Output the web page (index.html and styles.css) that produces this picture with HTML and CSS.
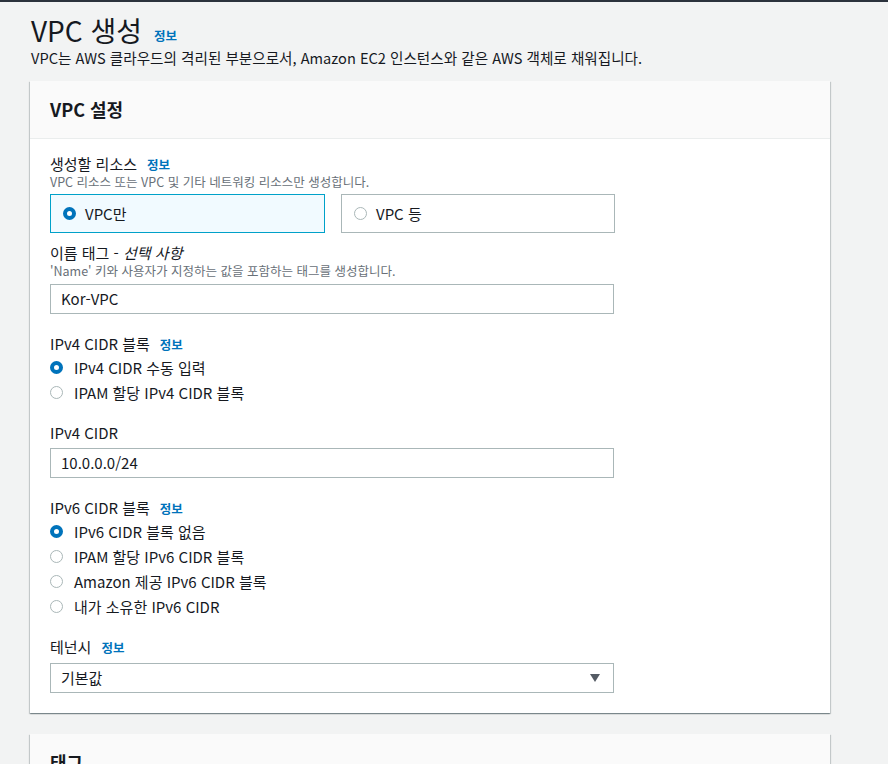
FILE: index.html
```html
<!DOCTYPE html>
<html lang="ko">
<head>
<meta charset="utf-8">
<title>VPC 생성</title>
<link rel="stylesheet" href="styles.css">
</head>
<body>
<div class="topbar"></div>
<main class="page">
  <header class="page-head">
    <h1 class="title">VPC 생성<a class="info" href="#">정보</a></h1>
    <p class="lead">VPC는 AWS 클라우드의 격리된 부분으로서, Amazon EC2 인스턴스와 같은 AWS 객체로 채워집니다.</p>
  </header>

  <section class="card">
    <div class="card-head"><h2>VPC 설정</h2></div>
    <div class="card-body">
      <div class="field">
        <div class="label">생성할 리소스<a class="info" href="#">정보</a></div>
        <div class="desc">VPC 리소스 또는 VPC 및 기타 네트워킹 리소스만 생성합니다.</div>
        <div class="tiles">
          <div class="tile selected"><span class="radio on"></span><span>VPC만</span></div>
          <div class="tile"><span class="radio"></span><span>VPC 등</span></div>
        </div>
      </div>

      <div class="field f-name">
        <div class="label">이름 태그 - <em>선택 사항</em></div>
        <div class="desc">'Name' 키와 사용자가 지정하는 값을 포함하는 태그를 생성합니다.</div>
        <div class="input">Kor-VPC</div>
      </div>

      <div class="field f-sec">
        <div class="label">IPv4 CIDR 블록<a class="info" href="#">정보</a></div>
        <div class="radios">
          <div class="opt"><span class="radio on"></span>IPv4 CIDR 수동 입력</div>
          <div class="opt"><span class="radio"></span>IPAM 할당 IPv4 CIDR 블록</div>
        </div>
      </div>

      <div class="field f-after-radios">
        <div class="label">IPv4 CIDR</div>
        <div class="input">10.0.0.0/24</div>
      </div>

      <div class="field f-sec">
        <div class="label">IPv6 CIDR 블록<a class="info" href="#">정보</a></div>
        <div class="radios">
          <div class="opt"><span class="radio on"></span>IPv6 CIDR 블록 없음</div>
          <div class="opt"><span class="radio"></span>IPAM 할당 IPv6 CIDR 블록</div>
          <div class="opt"><span class="radio"></span>Amazon 제공 IPv6 CIDR 블록</div>
          <div class="opt"><span class="radio"></span>내가 소유한 IPv6 CIDR</div>
        </div>
      </div>

      <div class="field f-after-radios">
        <div class="label">테넌시<a class="info" href="#">정보</a></div>
        <div class="input select"><span>기본값</span><span class="caret"></span></div>
      </div>
    </div>
  </section>

  <section class="card">
    <div class="card-head"><h2>태그</h2></div>
    <div class="card-body short"></div>
  </section>
</main>
</body>
</html>
```

FILE: styles.css
```css
* { box-sizing: border-box; }
html, body { margin: 0; padding: 0; }
body {
  background: #f2f3f3;
  color: #16191f;
  font-family: "Noto Sans CJK KR", "Noto Sans", sans-serif;
  font-size: 15px;
  line-height: 20px;
}
.topbar { height: 2px; background: #2b323c; }
.page { padding: 0 57px 0 30px; }
.page-head { padding-top: 10px; }
.title {
  margin: 0;
  font-size: 28px;
  line-height: 36px;
  font-weight: 400;
  padding-left: 1px;
}
.info {
  color: #0073bb;
  font-weight: 700;
  font-size: 12.5px;
  line-height: 16px;
  text-decoration: none;
  margin-left: 10px;
}
.title .info { margin-left: 12px; vertical-align: 1px; }
.lead { margin: 0 0 0 1px; line-height: 20px; font-size: 14.6px; }
.card {
  background: #fff;
  margin-top: 13px;
  box-shadow: 0 1px 1px 0 rgba(0,28,36,0.3), 1px 1px 1px 0 rgba(0,28,36,0.15), -1px 1px 1px 0 rgba(0,28,36,0.15);
  width: 800px;
}
.card + .card { margin-top: 21px; }
.card-head {
  background: #fafafa;
  border-bottom: 1px solid #eaeded;
  padding: 17px 20px 18px;
}
.card-head h2 { margin: 0; font-size: 18px; line-height: 22px; font-weight: 700; }
.card-body { padding: 15px 20px 20px; width: 604px; }
.card-body.short { height: 40px; }
.label { line-height: 20px; }
.label em { font-style: italic; }
.desc { font-size: 12.5px; line-height: 16px; color: #687078; }
.tiles { display: grid; grid-template-columns: 275px 274px; gap: 16px; margin-top: 4px; }
.tile {
  height: 39px;
  border: 1px solid #aab7b8;
  display: flex;
  align-items: center;
  padding-left: 12px;
  gap: 9px;
}
.tile.selected { background: #f1faff; border-color: #00a1c9; }
.radio {
  width: 13px; height: 13px;
  border-radius: 50%;
  border: 1px solid #aab7b8;
  background: #fff;
  flex: none;
}
.radio.on { border: 4px solid #0073bb; }
.f-name { margin-top: 10px; }
.input {
  height: 30px;
  border: 1px solid #aab7b8;
  margin-top: 5px;
  padding: 0 10px;
  display: flex;
  align-items: center;
  background: #fff;
}
.f-sec { margin-top: 20px; }
.radios { margin-top: 1px; }
.opt { display: flex; align-items: center; gap: 11px; height: 25px; }
.f-after-radios { margin-top: 18px; }
.f-after-radios .input.select { margin-top: 6px; }
.select { justify-content: space-between; padding-right: 13px; }
.caret {
  width: 0; height: 0;
  border-left: 5px solid transparent;
  border-right: 5px solid transparent;
  border-top: 8px solid #545b64;
}
```
